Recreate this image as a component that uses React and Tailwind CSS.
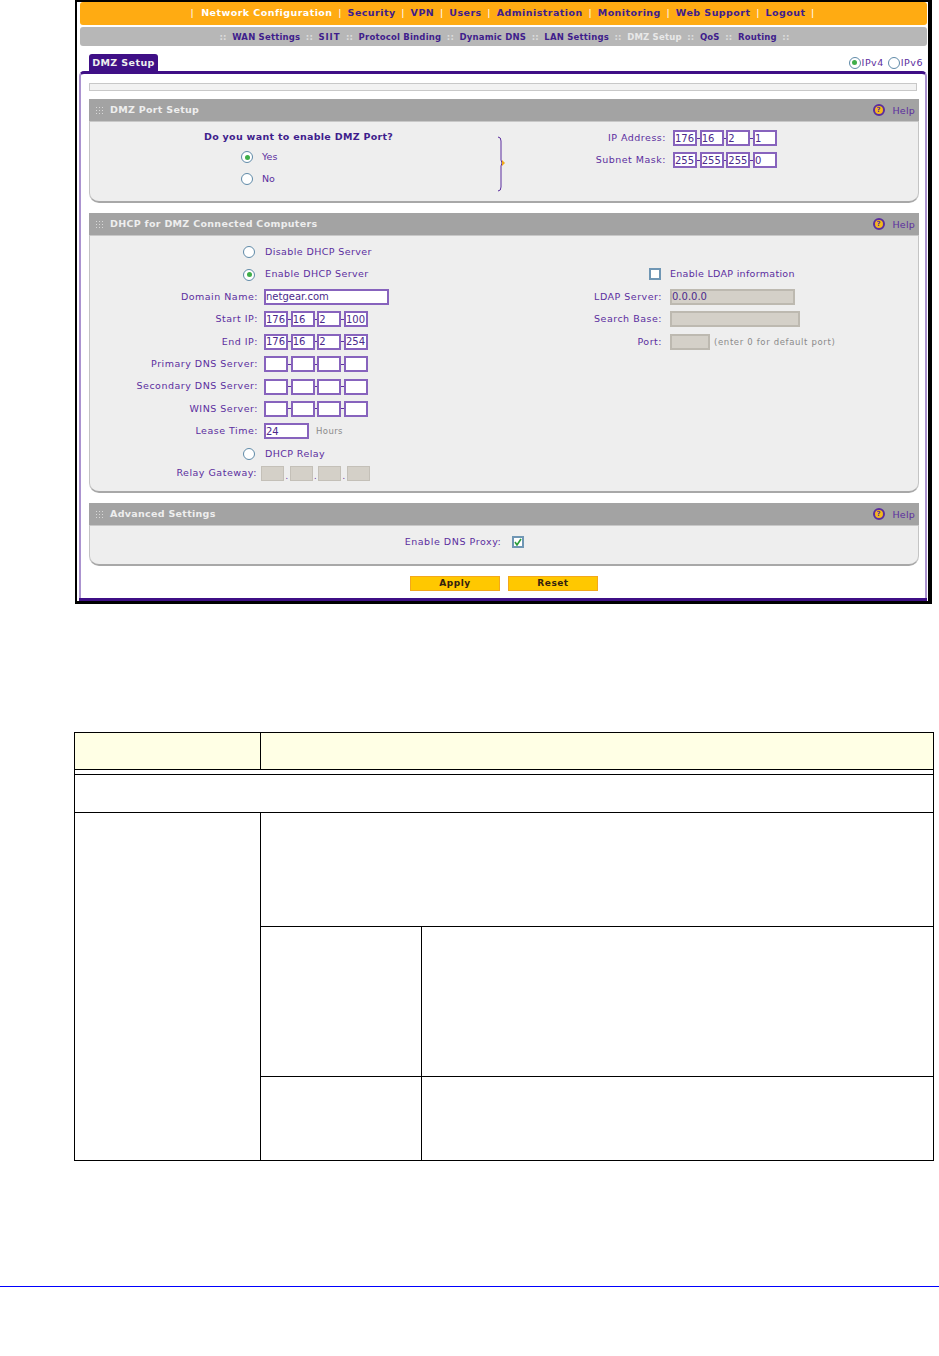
import React from "react";

const purple = "text-[#5b2d9e]";
const font = "font-['DejaVu_Sans',sans-serif]";

function Radio({ on }) {
  return (
    <span className="flex h-[12px] w-[12px] shrink-0 items-center justify-center rounded-full border-[1.5px] border-[#5f8aa8] bg-white">
      {on && <span className="h-[5px] w-[5px] rounded-full bg-[#3fae49]" />}
    </span>
  );
}

function IpBoxes({ values = ["", "", "", ""] }) {
  return (
    <div className="flex items-center">
      {values.map((v, i) => (
        <React.Fragment key={i}>
          {i > 0 && <span className="h-px w-[2.67px] bg-[#5b2d9e]" />}
          <span className="flex h-[16px] w-[24px] items-center border-2 border-[#8763bd] bg-white text-[10px] text-[#4b2a8c]">{v}</span>
        </React.Fragment>
      ))}
    </div>
  );
}

function SectionHeader({ title }) {
  return (
    <div className="flex h-[22px] items-center justify-between bg-[#a3a3a3] pl-[7px] pr-[4px]">
      <div className="flex items-center gap-[7px]">
        <span className="grid grid-cols-3 gap-[2px]">
          {Array.from({ length: 9 }).map((_, i) => (
            <span key={i} className="h-px w-px bg-[#d8d8d8]" />
          ))}
        </span>
        <span className="text-[9.5px] font-bold tracking-[0.3px] text-[#eeeeee]">{title}</span>
      </div>
      <div className="flex items-center gap-[8px]">
        <span className="flex h-[12px] w-[12px] items-center justify-center rounded-full border-2 border-[#5b2d9e] bg-[#f5b81c] text-[7px] font-bold leading-none text-[#5b2d9e]">?</span>
        <span className={`mt-[2px] text-[9.5px] tracking-[0.2px] ${purple}`}>Help</span>
      </div>
    </div>
  );
}

function Label({ children, w = "w-[168px]" }) {
  return <span className={`${w} shrink-0 text-right text-[9.5px] tracking-[0.5px] ${purple}`}>{children}:</span>;
}

function Row({ label, children }) {
  return (
    <div className="flex h-[22.4px] items-center gap-[6px]">
      <Label>{label}</Label>
      {children}
    </div>
  );
}

function RadioRow({ label, on }) {
  return (
    <div className="flex h-[22.4px] items-center">
      <span className="ml-[153px] mr-[10px]"><Radio on={on} /></span>
      <span className={`text-[9.5px] tracking-[0.4px] ${purple}`}>{label}</span>
    </div>
  );
}

function Field({ w, value, disabled }) {
  return (
    <span className={`flex h-[16px] ${w} items-center border-2 text-[10px] text-[#4b2a8c] ${disabled ? "border-[#bdb9b0] bg-[#d4d0c8]" : "border-[#8763bd] bg-white"}`}>{value}</span>
  );
}

function Panel({ children, className = "" }) {
  return <div className={`rounded-b-[10px] border-x border-t border-b-2 border-x-[#c4c4c4] border-t-[#c8c8c8] border-b-[#a8a8a8] bg-[#eeeeee] ${className}`}>{children}</div>;
}

function NavItems({ items, sep, active }) {
  return (
    <div className="flex items-center justify-center font-bold">
      {items.map((t) => (
        <React.Fragment key={t}>
          {sep}
          <span className={`${active === t ? "text-[#e8e8e8]" : "text-[#3f1d8c]"} ${t === "SIIT" ? "tracking-[0.9px]" : ""}`}>{t}</span>
        </React.Fragment>
      ))}
      {sep}
    </div>
  );
}

function RouterScreenshot() {
  return (
    <div className={`ml-[75px] w-[857px] border-y-[3px] border-t-2 border-l-2 border-r-4 border-black bg-white pl-[3px] pr-px ${font}`}>
      <div className="flex h-[23px] items-center justify-center rounded-[3px] bg-[#ffab12] pl-[4px] text-[9.5px] tracking-[0.45px]">
        <span className="text-white">|&nbsp;&nbsp;</span>
        <span className="font-bold text-white">Network Configuration</span>
        <NavItems
          items={["Security", "VPN", "Users", "Administration", "Monitoring", "Web Support", "Logout"]}
          sep={<span className="mx-[5.7px] font-normal text-white">|</span>}
        />
      </div>
      <div className="mt-[2px] flex h-[19px] items-center justify-center rounded-[3px] bg-[#b7b7b7] pl-[3px] pr-[1px] pt-px text-[8.5px] tracking-[0.2px]">
        <NavItems
          items={["WAN Settings", "SIIT", "Protocol Binding", "Dynamic DNS", "LAN Settings", "DMZ Setup", "QoS", "Routing"]}
          active="DMZ Setup"
          sep={<span className="mx-[5.5px] text-[#dddddd]">::</span>}
        />
      </div>
      <div className="mt-[8px] flex h-[17px] items-end justify-between pl-[9px] pr-[4px]">
        <span className="flex h-[17px] w-[69px] items-center justify-center rounded-t-[3px] bg-[#3f0f86] pt-[2px] text-[9.5px] font-bold tracking-[0.4px] text-[#eeeeee]">DMZ Setup</span>
        <div className={`mb-[1px] flex items-center gap-[1px] text-[9.5px] tracking-[0.5px] ${purple}`}>
          <Radio on /><span className="mr-[3px]">IPv4</span><Radio /><span>IPv6</span>
        </div>
      </div>
      <div className="-ml-px rounded-t-[5px] border-x-2 border-t-[3px] border-x-[#ab93cf] border-t-[#3f0f86] pl-[8px] pr-[6px] pt-[9px]">
        <div className="mr-[2px] h-[8px] border border-[#c8c8c8] bg-[#f2f2f2]" />
        <div className="mt-[8px]">
          <SectionHeader title="DMZ Port Setup" />
          <Panel className="flex h-[82px]">
            <div className="w-[408px] pt-[8px]">
              <div className="ml-[114px] text-[9.5px] font-bold tracking-[0.3px] text-[#3f1d8c]">Do you want to enable DMZ Port?</div>
              <div className="ml-[151px] mt-[6px] flex items-center gap-[9px]"><Radio on /><span className={`text-[9.5px] ${purple}`}>Yes</span></div>
              <div className="ml-[151px] mt-[7px] flex items-center gap-[9px]"><Radio /><span className={`text-[9.5px] ${purple}`}>No</span></div>
            </div>
            <svg width="8" height="56" viewBox="0 0 8 56" className="mt-[14px] shrink-0">
              <path d="M0 1 Q3 1 3 5 V24 L4 27 L3 30 V51 Q3 55 0 55" fill="none" stroke="#5b2d9e" strokeWidth="1" />
              <path d="M4 24 L7 27 L4 30 Z" fill="#f0a818" />
            </svg>
            <div className="ml-[65px] pt-[5px]">
              <div className="flex h-[22px] items-center gap-[7px]"><Label w="w-[95px]">IP Address</Label><IpBoxes values={["176", "16", "2", "1"]} /></div>
              <div className="flex h-[22px] items-center gap-[7px]"><Label w="w-[95px]">Subnet Mask</Label><IpBoxes values={["255", "255", "255", "0"]} /></div>
            </div>
          </Panel>
        </div>
        <div className="mt-[10px]">
          <SectionHeader title="DHCP for DMZ Connected Computers" />
          <Panel className="flex h-[258px] pt-[5px]">
            <div className="w-[411px]">
              <RadioRow label="Disable DHCP Server" />
              <RadioRow label="Enable DHCP Server" on />
              <Row label="Domain Name"><Field w="w-[125px]" value="netgear.com" /></Row>
              <Row label="Start IP"><IpBoxes values={["176", "16", "2", "100"]} /></Row>
              <Row label="End IP"><IpBoxes values={["176", "16", "2", "254"]} /></Row>
              <Row label="Primary DNS Server"><IpBoxes /></Row>
              <Row label="Secondary DNS Server"><IpBoxes /></Row>
              <Row label="WINS Server"><IpBoxes /></Row>
              <Row label="Lease Time">
                <Field w="w-[45px]" value="24" />
                <span className="ml-[1px] text-[8.5px] tracking-[0.4px] text-[#8a8a8a]">Hours</span>
              </Row>
              <RadioRow label="DHCP Relay" />
              <div className="flex h-[17px] items-center gap-[4px]">
                <Label w="w-[167px]">Relay Gateway</Label>
                <div className="flex items-end">
                  {[0, 1, 2, 3].map((i) => (
                    <React.Fragment key={i}>
                      {i > 0 && <span className="w-[5.5px] text-center text-[8px] leading-none text-[#5b2d9e]">.</span>}
                      <span className="h-[15px] w-[23px] border border-[#c4c0b8] bg-[#d4d0c8]" />
                    </React.Fragment>
                  ))}
                </div>
              </div>
            </div>
            <div className="pt-[22px]">
              <div className="flex h-[22.6px] items-center">
                <span className="ml-[148px] mr-[9px] h-[12px] w-[12px] border-2 border-[#6f96b4] bg-white" />
                <span className={`text-[9.5px] tracking-[0.3px] ${purple}`}>Enable LDAP information</span>
              </div>
              <div className="flex h-[22.6px] items-center gap-[8px]"><Label w="w-[161px]">LDAP Server</Label><Field disabled w="w-[125px]" value="0.0.0.0" /></div>
              <div className="flex h-[22.6px] items-center gap-[8px]"><Label w="w-[161px]">Search Base</Label><Field disabled w="w-[130px]" /></div>
              <div className="flex h-[22.6px] items-center gap-[8px]">
                <Label w="w-[161px]">Port</Label>
                <Field disabled w="w-[40px]" />
                <span className="-ml-[4px] text-[8.5px] tracking-[0.65px] text-[#8a8a8a]">(enter 0 for default port)</span>
              </div>
            </div>
          </Panel>
        </div>
        <div className="mt-[10px]">
          <SectionHeader title="Advanced Settings" />
          <Panel className="flex h-[41px] items-center justify-center pb-[6px] pr-[79px]">
            <span className={`mr-[11px] text-[9.5px] tracking-[0.55px] ${purple}`}>Enable DNS Proxy:</span>
            <span className="flex h-[12px] w-[12px] items-center justify-center border-2 border-[#6f96b4] bg-white">
              <svg width="8" height="8" viewBox="0 0 8 8"><path d="M1 4 L3 7 L7 1" fill="none" stroke="#2a9d3a" strokeWidth="1.6" /></svg>
            </span>
          </Panel>
        </div>
        <div className="mt-[10px] flex h-[22px] justify-center gap-[8px]">
          <span className="flex h-[15px] w-[90px] items-center justify-center border border-[#f3a81b] bg-[#ffc800] text-[9px] font-bold tracking-[0.5px] text-[#33220f]">Apply</span>
          <span className="flex h-[15px] w-[90px] items-center justify-center border border-[#f3a81b] bg-[#ffc800] text-[9px] font-bold tracking-[0.5px] text-[#33220f]">Reset</span>
        </div>
      </div>
      <div className="-ml-px h-[3px] bg-[#3f0f86]" />
    </div>
  );
}

function SpecTable() {
  const line = "border-black";
  return (
    <div className={`ml-[74px] mt-[128px] w-[860px] border ${line}`}>
      <div className={`flex h-[37px] border-b ${line} bg-[#ffffe5]`}>
        <div className={`w-[186px] border-r ${line}`} />
      </div>
      <div className={`h-[5px] border-b ${line}`} />
      <div className={`h-[38px] border-b ${line}`} />
      <div className="flex h-[347px]">
        <div className={`w-[186px] border-r ${line}`} />
        <div className="flex flex-1 flex-col">
          <div className={`h-[114px] border-b ${line}`} />
          <div className={`flex h-[150px] border-b ${line}`}>
            <div className={`w-[161px] border-r ${line}`} />
          </div>
          <div className="flex flex-1">
            <div className={`w-[161px] border-r ${line}`} />
          </div>
        </div>
      </div>
    </div>
  );
}

export default function App() {
  return (
    <div className="h-[1356px] w-[939px] overflow-hidden bg-white">
      <RouterScreenshot />
      <SpecTable />
      <div className="mt-[125px] h-px bg-[#0000ff]" />
    </div>
  );
}
